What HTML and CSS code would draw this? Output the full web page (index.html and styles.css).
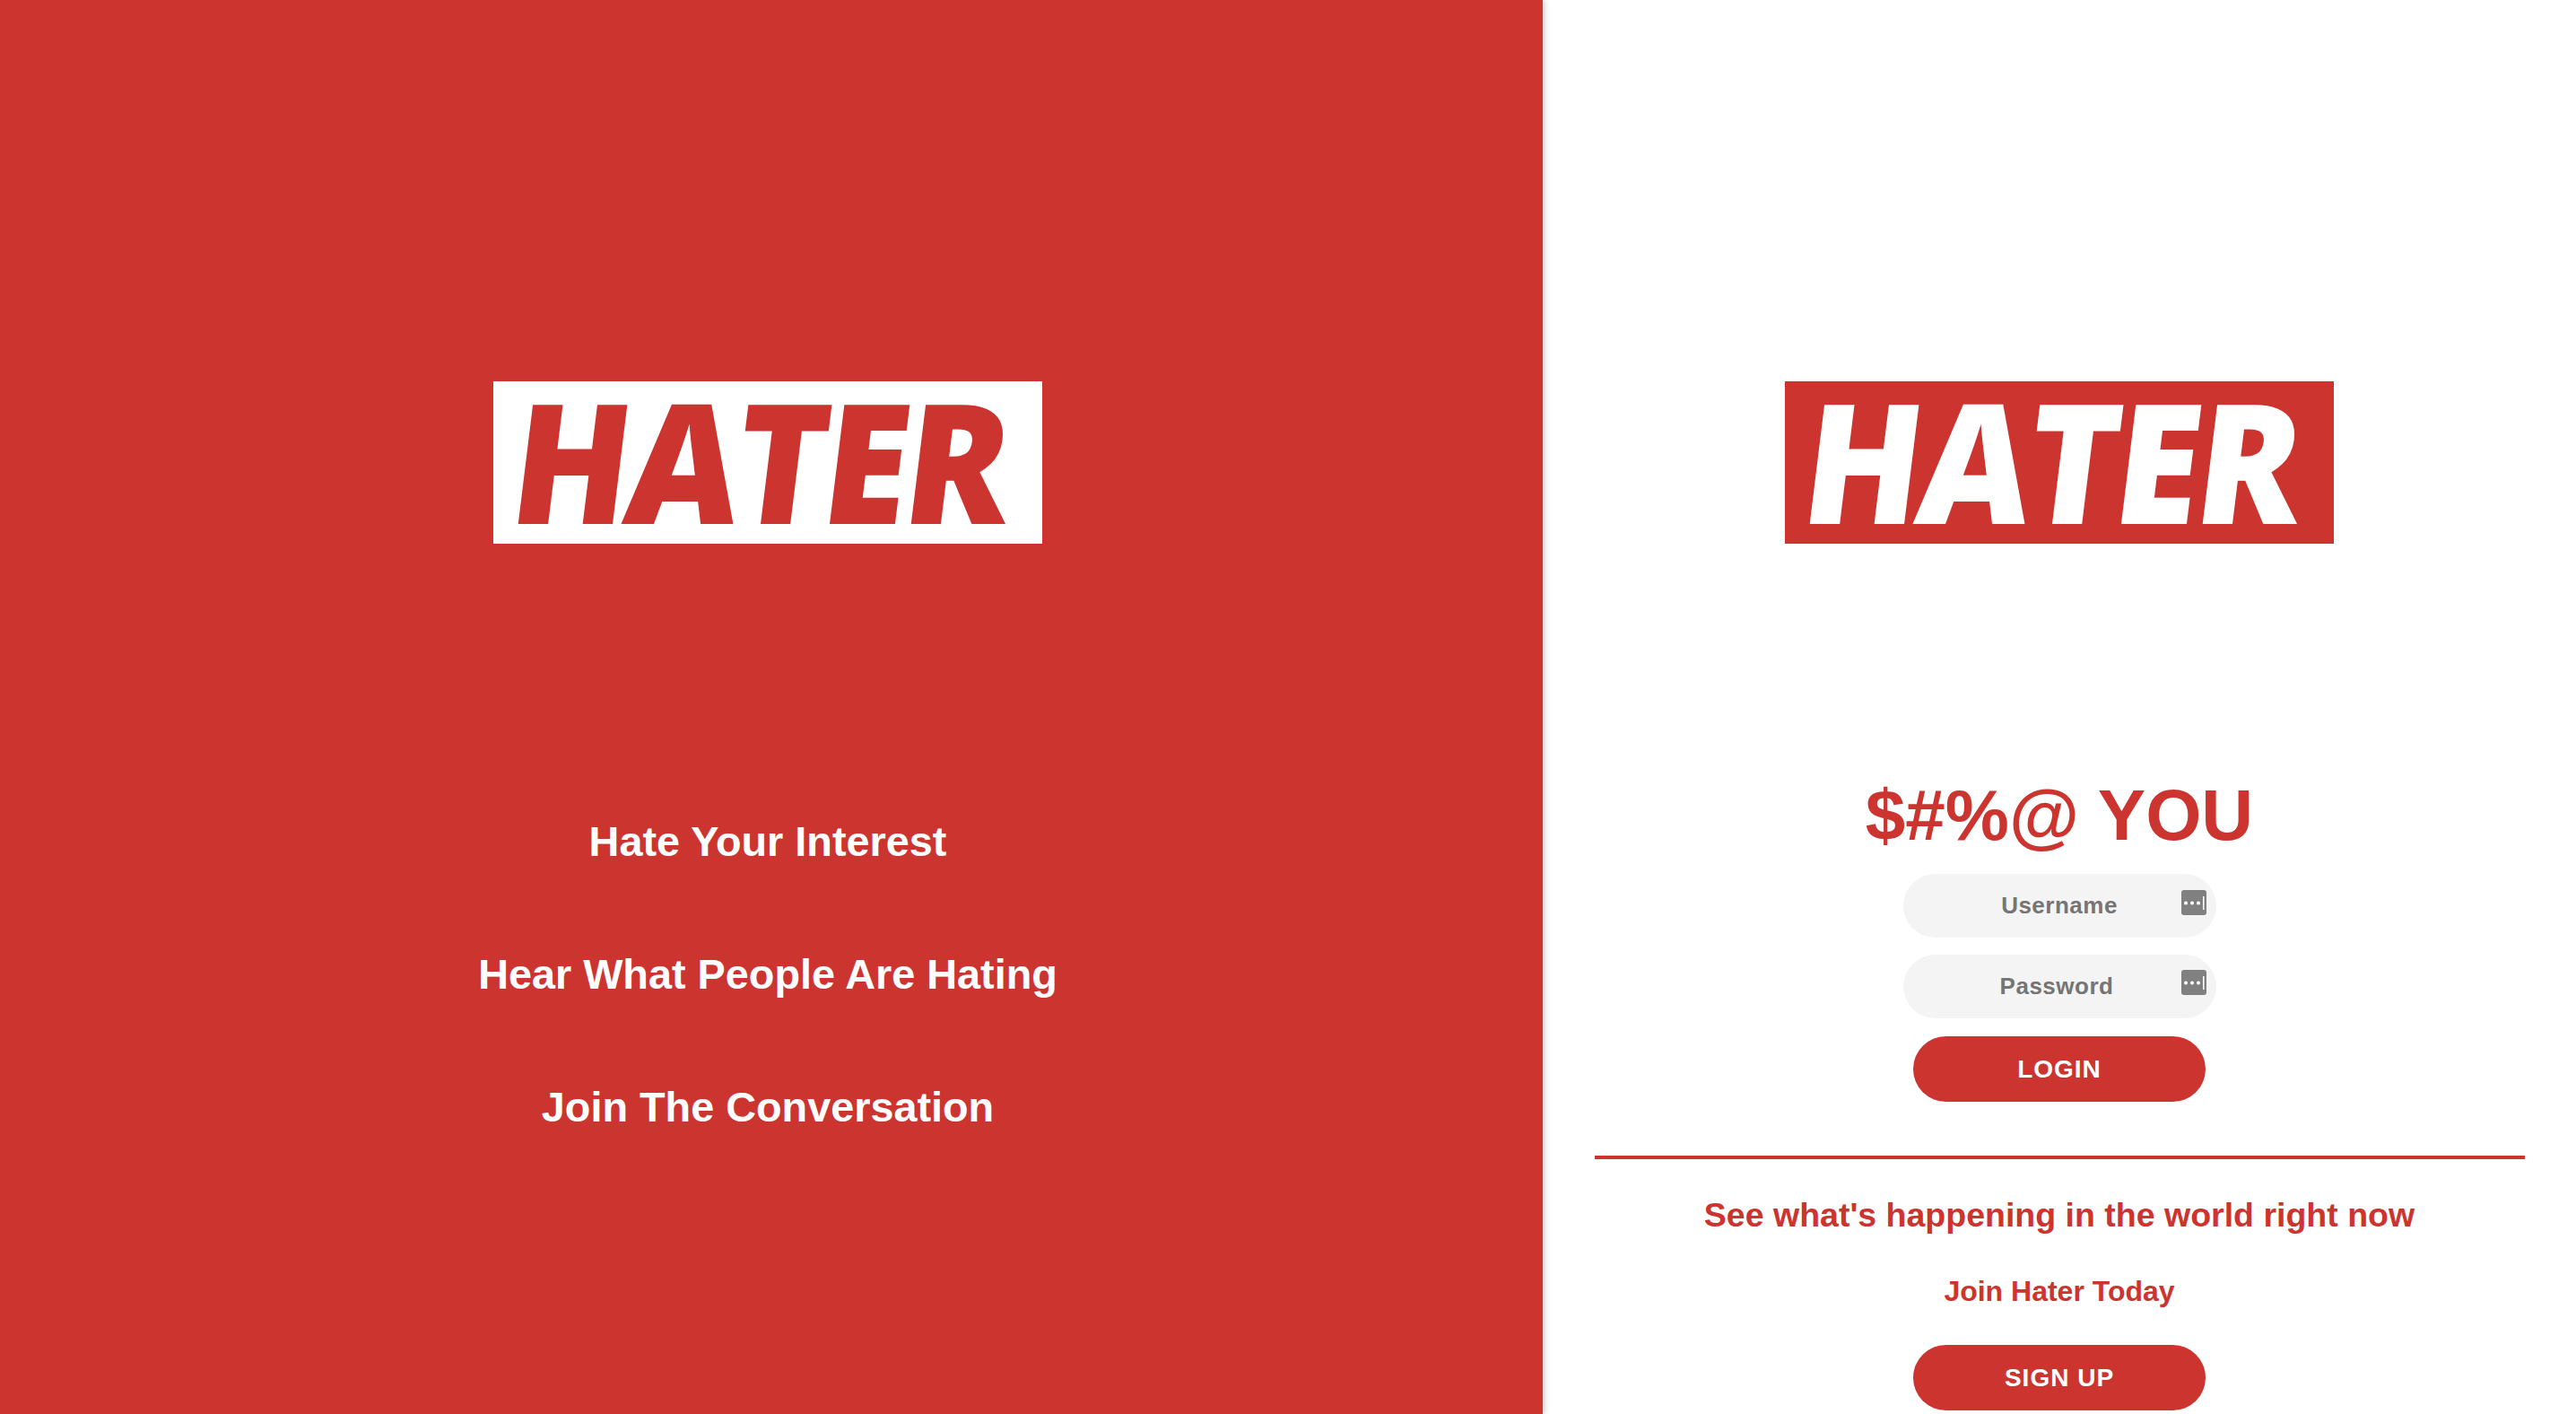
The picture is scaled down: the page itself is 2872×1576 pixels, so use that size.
FILE: index.html
```html
<!DOCTYPE html>
<html lang="en">
<head>
  <meta charset="UTF-8">
  <meta name="viewport" content="width=device-width, initial-scale=1.0">
  <title>Hater</title>
  <link rel="stylesheet" href="styles.css">
</head>
<body>
  <div class="page">
    <!-- Left panel -->
    <section class="intro">
      <div class="logo logo-white"><span>HATER</span></div>
      <ul class="intro-list">
        <li>Hate Your Interest</li>
        <li>Hear What People Are Hating</li>
        <li>Join The Conversation</li>
      </ul>
    </section>

    <!-- Login and signup -->
    <section class="auth">
      <div class="logo logo-red"><span>HATER</span></div>
      <h1 class="auth-title">$#%@ YOU</h1>
      <form class="login-form">
        <div class="field">
          <input type="text" placeholder="Username">
          <svg class="field-icon" viewBox="0 0 28 28"><rect width="28" height="28" rx="3" fill="#808080"/><circle cx="5" cy="14.500" r="2" fill="#fff"/><circle cx="12" cy="14.500" r="2" fill="#fff"/><circle cx="19" cy="14.500" r="2" fill="#fff"/><rect x="24" y="7" width="1.500" height="15" fill="#fff"/></svg>
        </div>
        <div class="field field-password">
          <input type="password" placeholder="Password">
          <svg class="field-icon" viewBox="0 0 28 28"><rect width="28" height="28" rx="3" fill="#808080"/><circle cx="5" cy="14.500" r="2" fill="#fff"/><circle cx="12" cy="14.500" r="2" fill="#fff"/><circle cx="19" cy="14.500" r="2" fill="#fff"/><rect x="24" y="7" width="1.500" height="15" fill="#fff"/></svg>
        </div>
        <button type="button" class="pill-btn">LOGIN</button>
      </form>
      <hr class="divider">
      <h2 class="signup-title">See what's happening in the world right now</h2>
      <h3 class="signup-sub">Join Hater Today</h3>
      <button type="button" class="pill-btn">SIGN UP</button>
    </section>
  </div>
</body>
</html>
```

FILE: styles.css
```css
* {
  box-sizing: border-box;
}

html,
body {
  margin: 0;
  padding: 0;
  height: 100%;
  overflow: hidden;
}

body {
  font-family: 'Liberation Sans', Arial, sans-serif;
  font-weight: 700;
  background-color: #fff;
  color: #cc342f;
}

.page {
  display: flex;
  height: 1576px;
}

.intro {
  position: relative;
  width: 1720px;
  padding: 425px 8px 0 0;
  background-color: #cc342f;
  color: #fff;
  display: flex;
  flex-direction: column;
  align-items: center;
  box-shadow: 0 0 8px rgba(0, 0, 0, 0.35);
}

.auth {
  flex: 1;
  padding-top: 425px;
  display: flex;
  flex-direction: column;
  align-items: center;
}

/* Logo */
.logo {
  width: 612px;
  height: 181px;
  display: flex;
  align-items: center;
  justify-content: center;
  font-family: 'Open Sans', sans-serif;
  font-size: 186px;
  font-weight: 800;
  letter-spacing: -4px;
  line-height: 1;
}

.logo span {
  display: block;
  margin: -8px 14px 0 0;
  transform: skewX(-7deg) scaleX(0.925);
}

.logo-white {
  background-color: #fff;
  color: #cc342f;
}

.logo-red {
  background-color: #cc342f;
  color: #fff;
}

.intro-list {
  list-style: none;
  margin: 304px 0 0;
  padding: 0;
  text-align: center;
  font-size: 46.800px;
  line-height: 56px;
}

.intro-list li {
  margin-bottom: 92px;
}

.auth-title {
  margin: 257px 0 0;
  font-size: 80px;
  line-height: 92px;
  font-weight: 700;
}

.login-form {
  display: flex;
  flex-direction: column;
  align-items: center;
  margin-top: 19px;
}

.field {
  position: relative;
  width: 349px;
  height: 71px;
  margin-bottom: 19px;
}

.field input {
  display: block;
  width: 100%;
  height: 100%;
  border: none;
  border-radius: 36px;
  outline: none;
  background-color: #f4f4f4;
  font-family: inherit;
  font-size: 26px;
  font-weight: 700;
  text-align: center;
  letter-spacing: 0.500px;
}

.field-password {
  margin-bottom: 20px;
}

.field-password input {
  padding-right: 8px;
}

.field input::placeholder {
  color: #757575;
  opacity: 1;
}

.field-icon {
  position: absolute;
  top: 18px;
  right: 11px;
  width: 28px;
  height: 28px;
}

.field-password .field-icon {
  top: 17px;
}

.pill-btn {
  display: block;
  width: 326px;
  height: 73px;
  border: none;
  border-radius: 37px;
  background-color: #cc342f;
  color: #fff;
  font-family: inherit;
  font-size: 28px;
  font-weight: 700;
  letter-spacing: 1px;
}

.divider {
  width: 1037px;
  height: 4px;
  margin: 60px 0 0;
  border: none;
  background-color: #cc342f;
}

.signup-title {
  margin: 37px 0 0;
  font-size: 37.500px;
  line-height: 50px;
  font-weight: 700;
}

.signup-sub {
  margin: 40px 0 0;
  font-size: 32px;
  line-height: 40px;
  font-weight: 700;
}

.signup-sub + .pill-btn {
  margin-top: 40px;
}
```
